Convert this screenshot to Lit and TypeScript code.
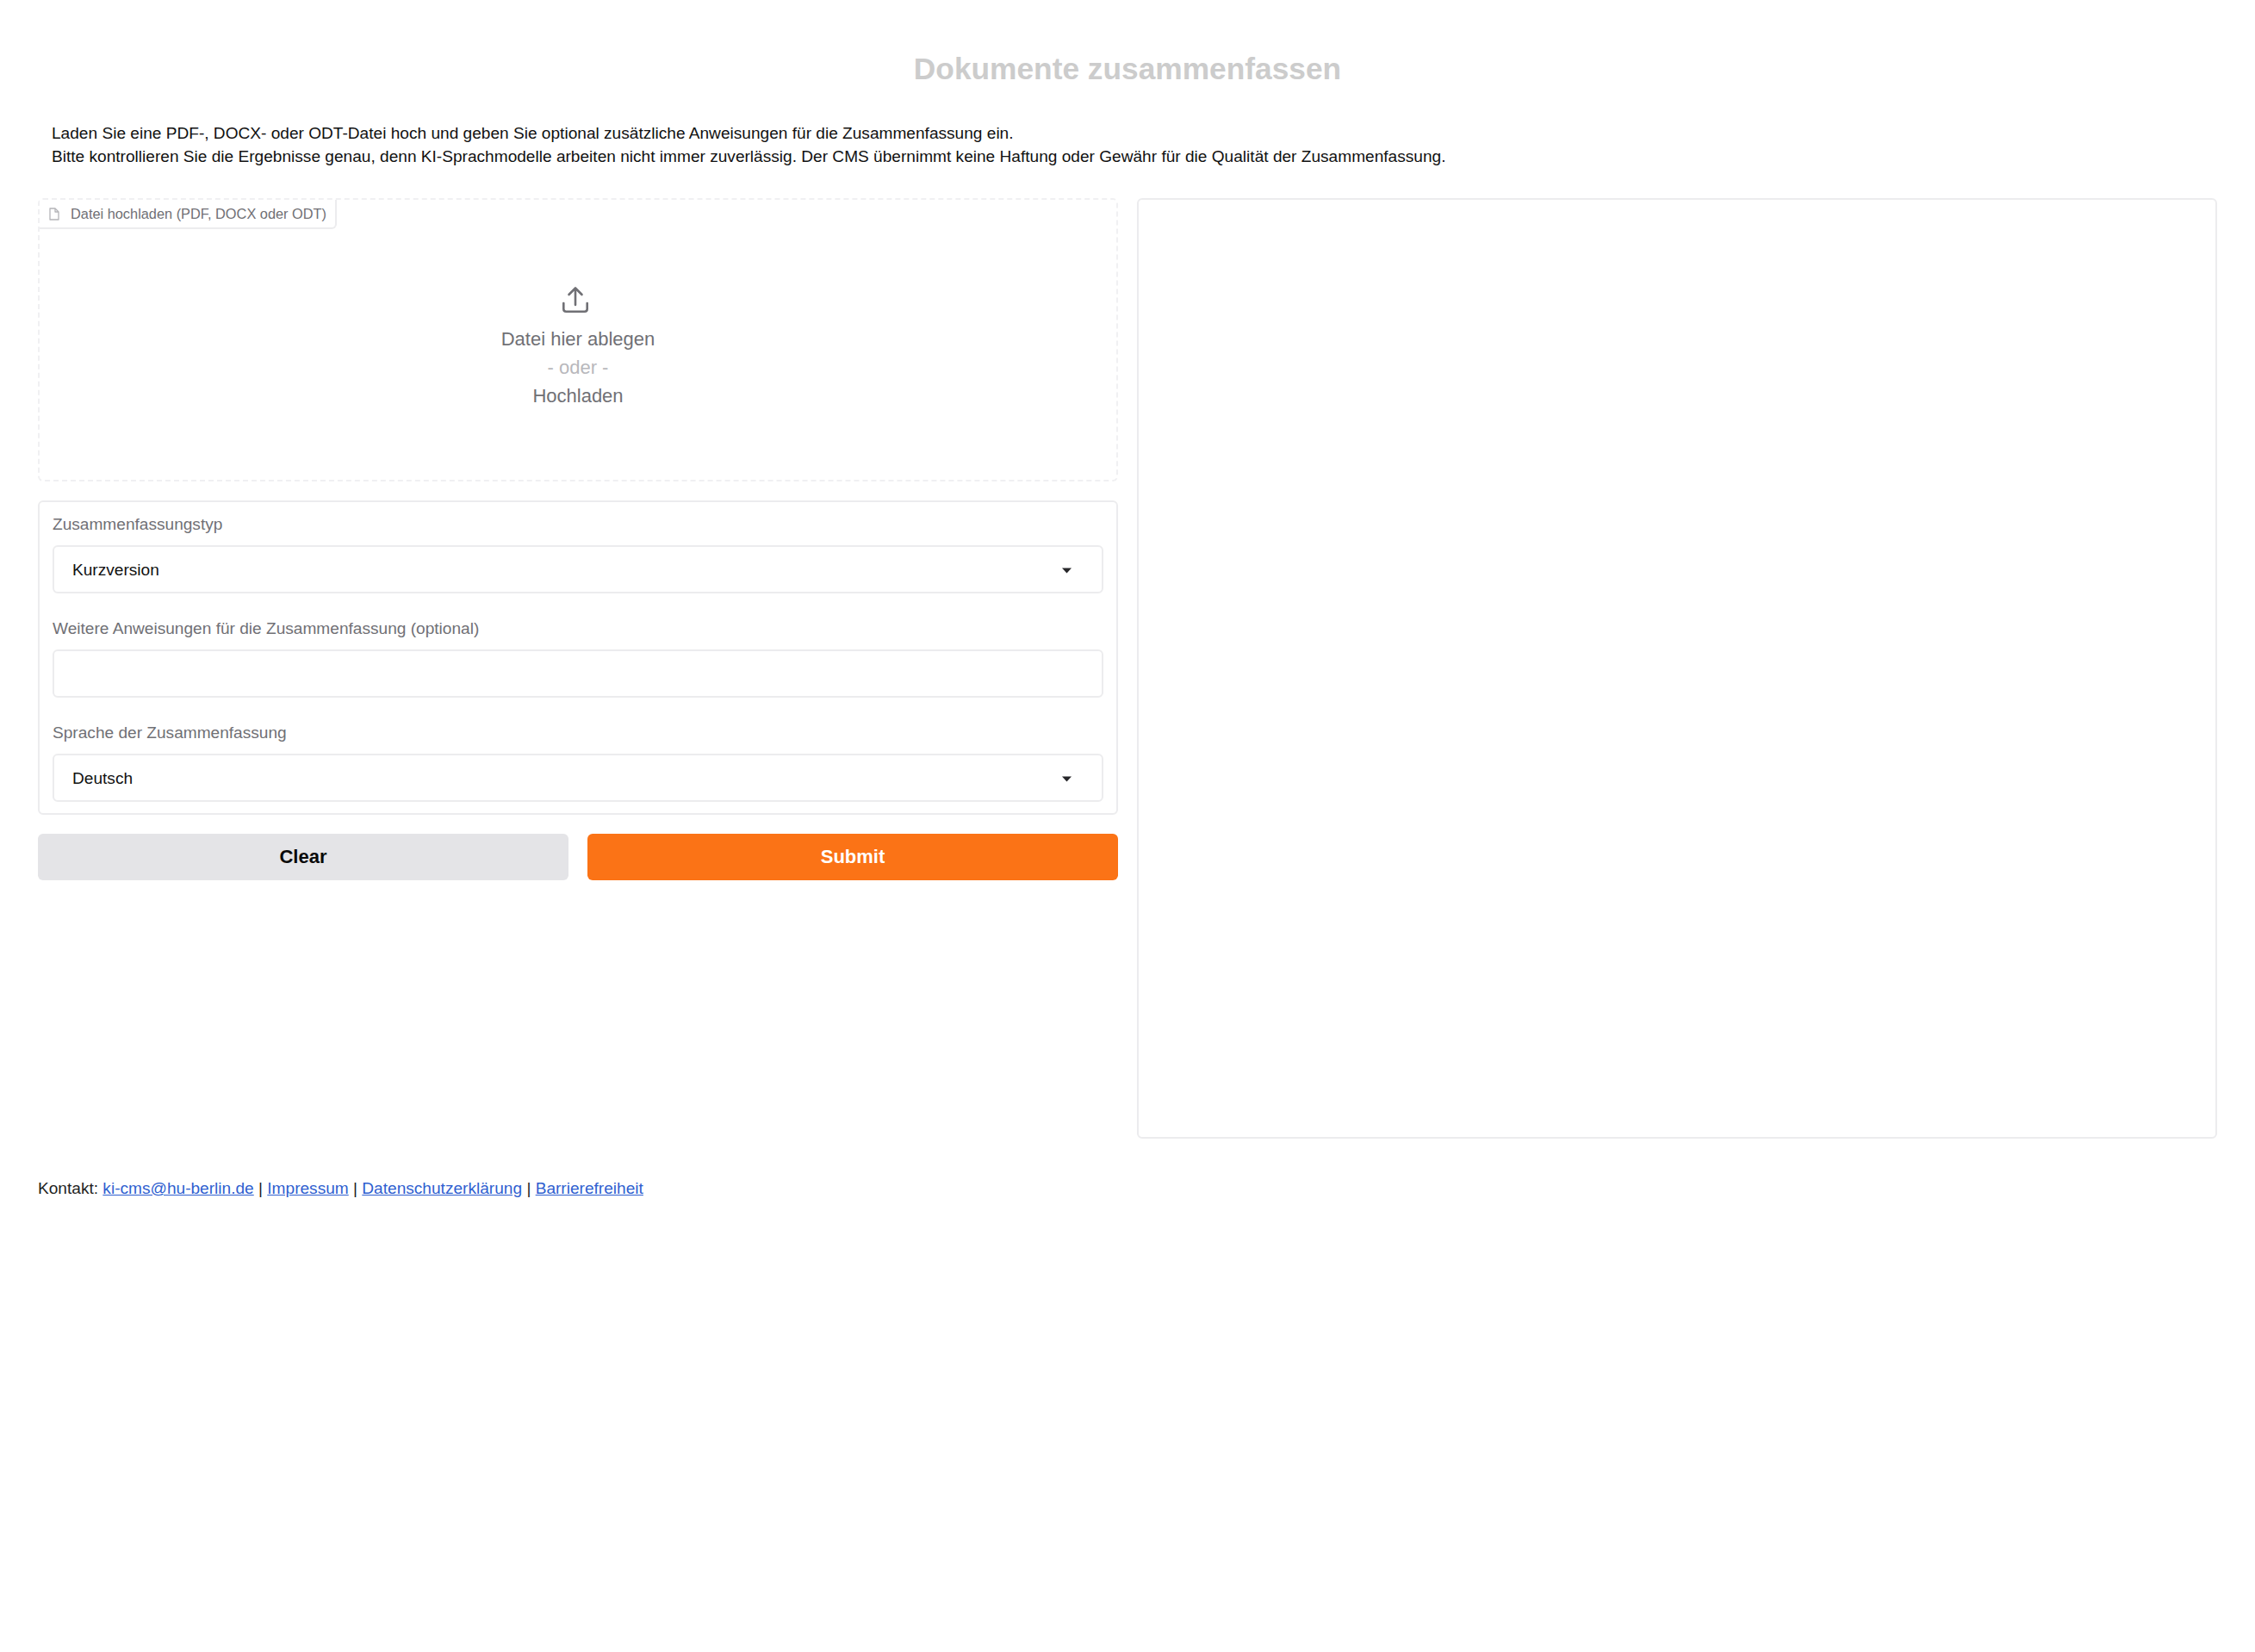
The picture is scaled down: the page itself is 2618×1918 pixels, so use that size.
import { LitElement, html, css } from "lit";
import { customElement } from "lit/decorators.js";

const caret = html`<svg class="caret" width="11" height="7" viewBox="0 0 11 7"><path d="M0 0.5H11L5.5 6.5Z" fill="#27272a"/></svg>`;

@customElement("app-root")
export class AppRoot extends LitElement {
  static styles = css`
    :host { display: block; font-family: "Liberation Sans", Arial, sans-serif; color: #111; background: #fff; min-height: 1918px; box-sizing: border-box; padding: 0 44px; }
    * { box-sizing: border-box; }
    h1 { margin: 0; padding-top: 59px; height: 141px; text-align: center; font-size: 35.3px; line-height: 42px; font-weight: 700; color: #cccccc; }
    .intro { margin: 0; padding: 0 16px; height: 89px; font-size: 19.1px; line-height: 27px; color: #111; }
    .main { display: grid; grid-template-columns: 1254px 1254px; column-gap: 22px; height: 1092px; }
    .left { display: flex; flex-direction: column; gap: 22px; }
    .upload { position: relative; height: 329px; border: 2px dashed #f0f0f2; border-radius: 6px; display: flex; flex-direction: column; align-items: center; padding-top: 100px; color: #707075; font-size: 22px; line-height: 33px; }
    .tag { position: absolute; left: 0; top: 0; height: 34px; width: 345px; display: flex; align-items: center; gap: 12px; padding: 1px 0 0 10px; white-space: nowrap; background: #fff; border: 2px solid #ececee; border-top: 0; border-left: 0; border-radius: 0 0 6px 0; font-size: 16.35px; color: #707075; }
    .tag svg { flex: none; }
    .up { display: block; flex: none; margin-bottom: 13px; margin-left: -6px; }
    .or { color: #b8b8bc; }
    .form { flex: none; height: 365px; border: 2px solid #ececee; border-radius: 6px; padding: 14px 15px 0; display: flex; flex-direction: column; }
    .field { flex: none; height: 121px; display: flex; flex-direction: column; }
    .label { flex: none; height: 36px; font-size: 19.1px; line-height: 24px; color: #707075; }
    .box { flex: none; height: 56px; border: 2px solid #ececee; border-radius: 6px; display: flex; align-items: center; justify-content: space-between; padding: 2px 35px 0 21px; font-size: 19.1px; color: #111; background: #fff; }
    .buttons { display: grid; grid-template-columns: 1fr 1fr; gap: 22px; }
    .btn { height: 54px; border: 0; border-radius: 6px; display: flex; align-items: center; justify-content: center; font: 700 22px "Liberation Sans", Arial, sans-serif; }
    .clear { background: #e4e4e7; color: #0a0a0a; }
    .submit { background: #fb7316; color: #fff; }
    .right { border: 2px solid #ececee; border-radius: 6px; height: 1092px; }
    .foot { margin: 0; padding-top: 46px; font-size: 19.1px; line-height: 24px; color: #1f1f1f; }
    a { color: #2f5fd0; }
  `;

  render() {
    return html`
      <h1>Dokumente zusammenfassen</h1>
      <p class="intro">Laden Sie eine PDF-, DOCX- oder ODT-Datei hoch und geben Sie optional zusätzliche Anweisungen für die Zusammenfassung ein.<br />Bitte kontrollieren Sie die Ergebnisse genau, denn KI-Sprachmodelle arbeiten nicht immer zuverlässig. Der CMS übernimmt keine Haftung oder Gewähr für die Qualität der Zusammenfassung.</p>
      <div class="main">
        <div class="left">
          <div class="upload">
            <div class="tag">
              <svg width="14" height="15" viewBox="0 0 14 15" fill="none" stroke="#b4b4b8" stroke-width="1.3" stroke-linejoin="round"><path d="M2 1H8L12 5V14H2Z"/><path d="M8 1V5H12"/></svg>
              <span>Datei hochladen (PDF, DOCX oder ODT)</span>
            </div>
            <svg class="up" width="32" height="32" viewBox="0 0 32 32" fill="none" stroke="#707075" stroke-width="2.6" stroke-linecap="round" stroke-linejoin="round"><path d="M16 22V2.5M8.5 10L16 2.5L23.5 10"/><path d="M2.3 20V26.7Q2.3 29.7 5.3 29.7H26.7Q29.7 29.7 29.7 26.7V20"/></svg>
            <div>Datei hier ablegen</div>
            <div class="or">- oder -</div>
            <div>Hochladen</div>
          </div>
          <div class="form">
            <div class="field"><div class="label">Zusammenfassungstyp</div><div class="box"><span>Kurzversion</span>${caret}</div></div>
            <div class="field"><div class="label">Weitere Anweisungen für die Zusammenfassung (optional)</div><div class="box"></div></div>
            <div class="field"><div class="label">Sprache der Zusammenfassung</div><div class="box"><span>Deutsch</span>${caret}</div></div>
          </div>
          <div class="buttons">
            <button class="btn clear">Clear</button>
            <button class="btn submit">Submit</button>
          </div>
        </div>
        <div class="right"></div>
      </div>
      <p class="foot">Kontakt: <a href="#">ki-cms@hu-berlin.de</a> | <a href="#">Impressum</a> | <a href="#">Datenschutzerklärung</a> | <a href="#">Barrierefreiheit</a></p>
    `;
  }
}
